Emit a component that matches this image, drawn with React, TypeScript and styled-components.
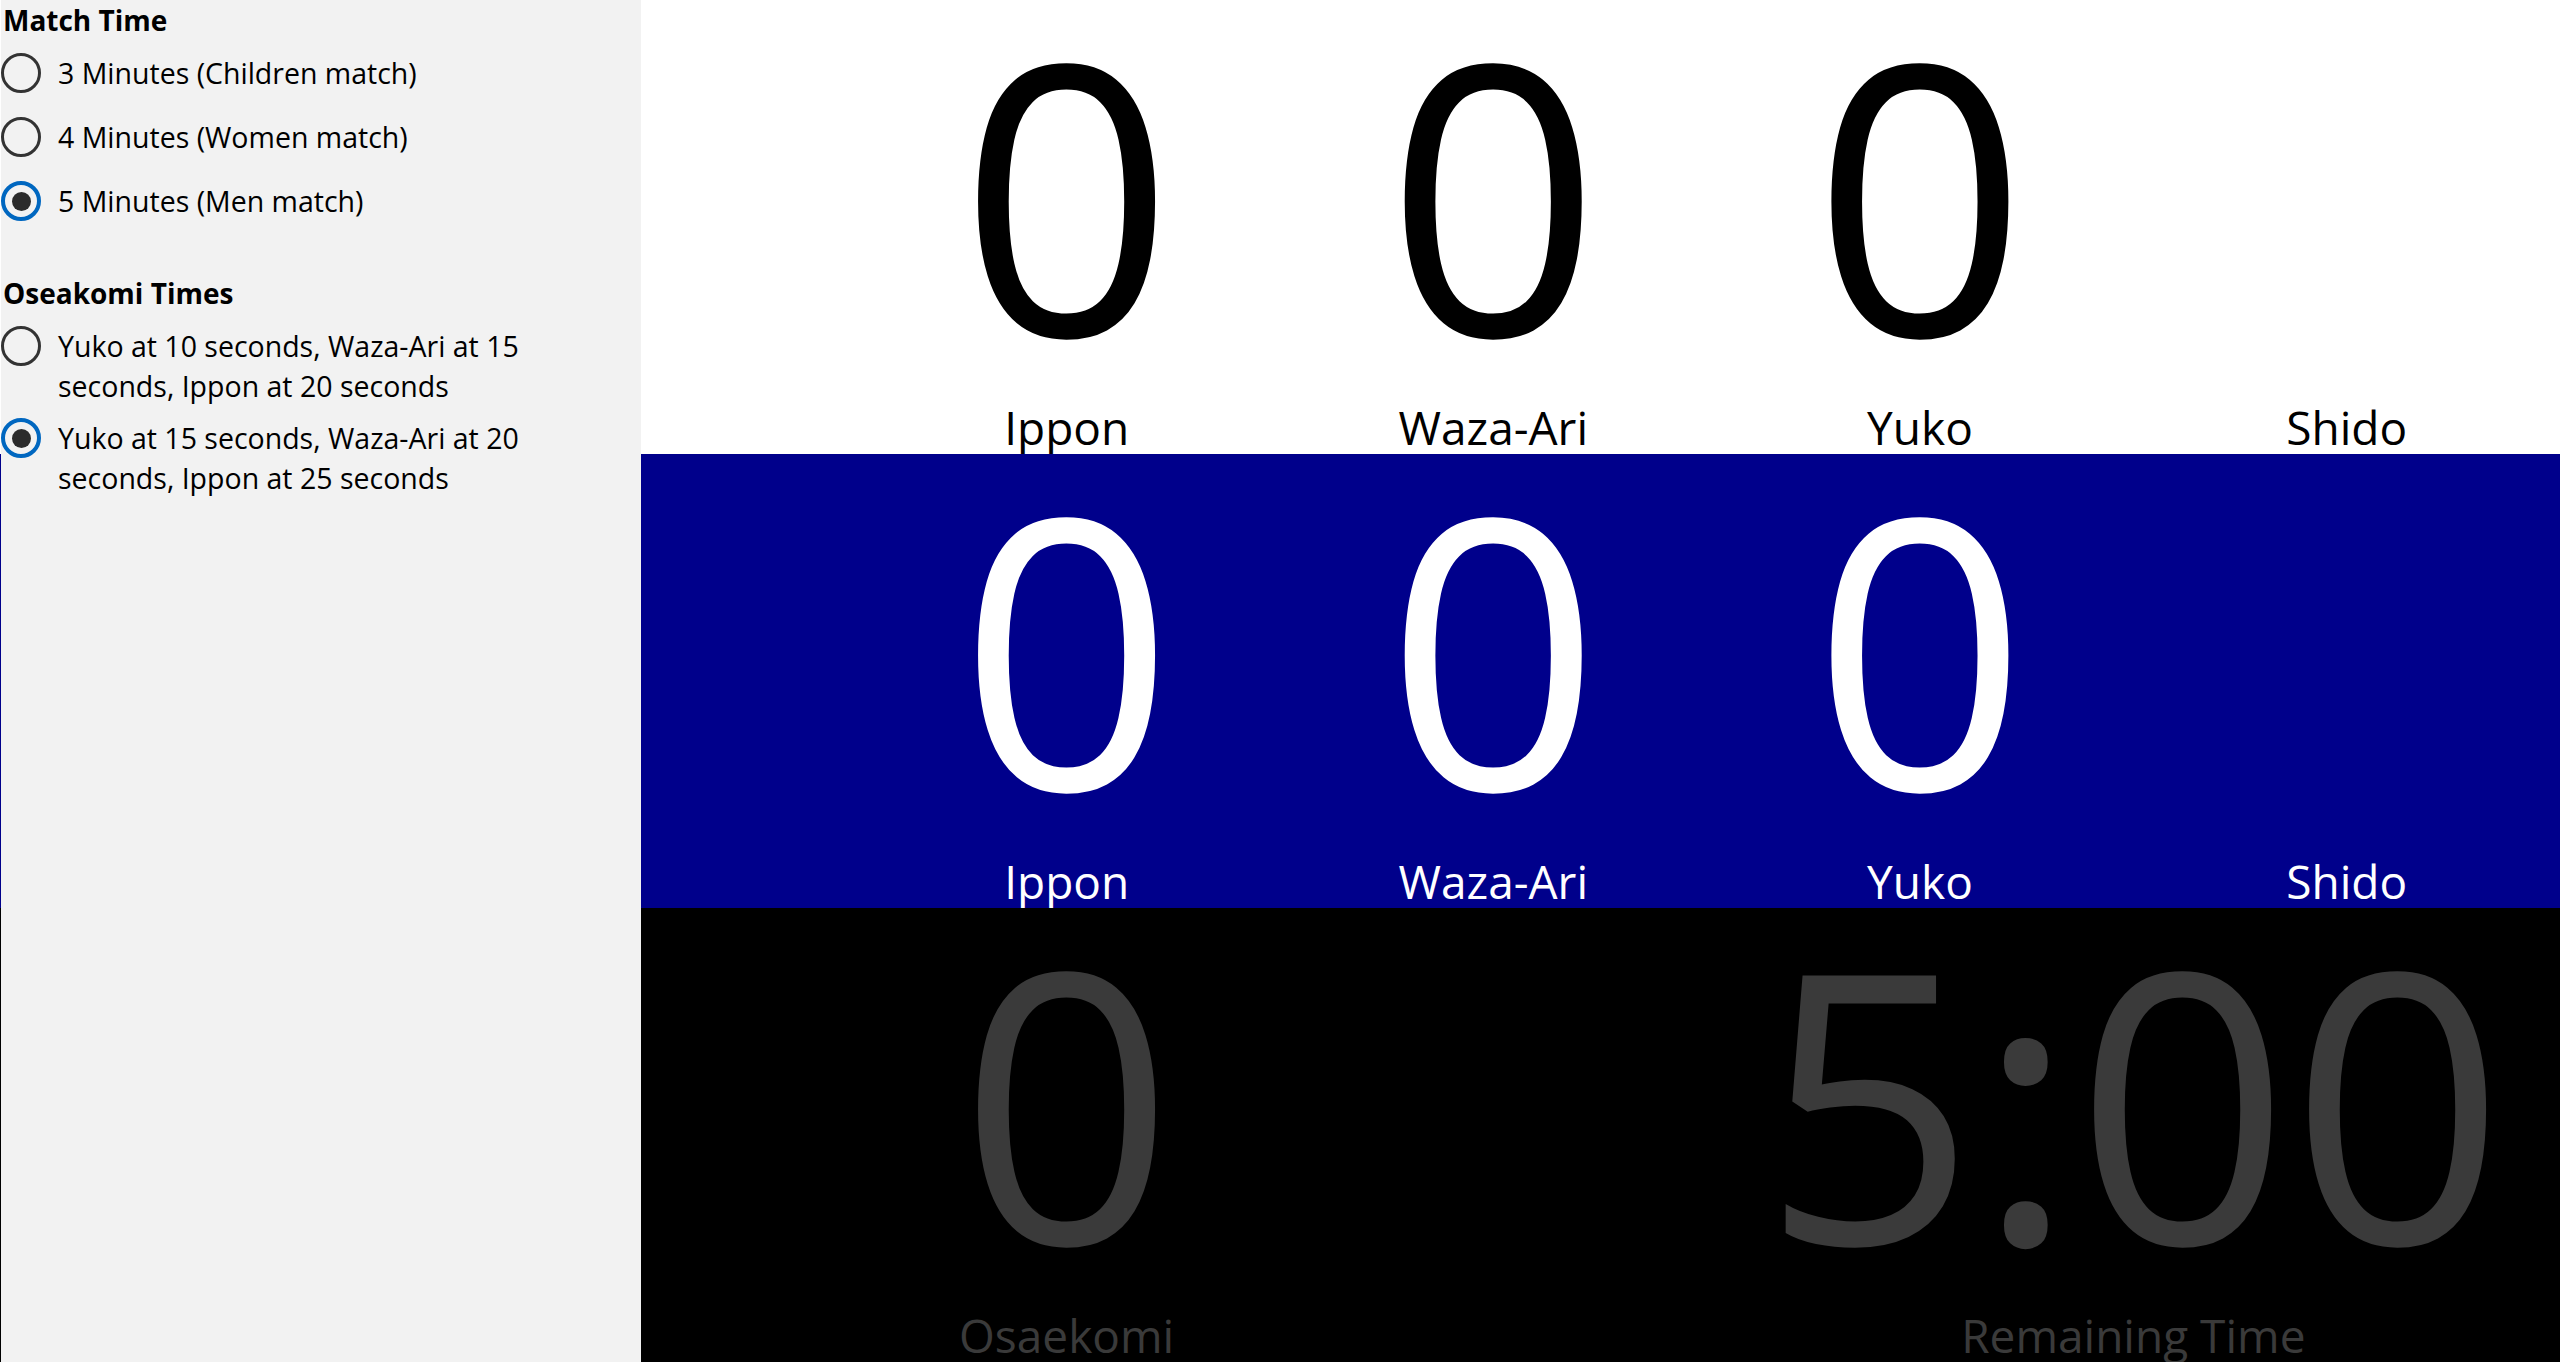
import React from "react";
import styled, { createGlobalStyle } from "styled-components";

const GlobalStyle = createGlobalStyle`
  html, body {
    margin: 0;
    padding: 0;
    overflow: hidden;
    background: #000;
  }
  body {
    font-family: "Open Sans", "Noto Sans", "Liberation Sans", sans-serif;
  }
  * { box-sizing: border-box; }
`;

const Page = styled.div`
  position: relative;
  width: 100vw;
  height: 100vh;
  overflow: hidden;
`;

const Board = styled.div`
  display: grid;
  grid-template-rows: repeat(3, 1fr);
  height: 100%;
`;

const Band = styled.div<{ $bg: string; $fg: string }>`
  display: grid;
  grid-template-columns: repeat(6, 1fr);
  background: ${(p) => p.$bg};
  color: ${(p) => p.$fg};
  overflow: hidden;
`;

const Cell = styled.div<{ $col: number; $span?: number }>`
  grid-column: ${(p) => p.$col} / span ${(p) => p.$span ?? 1};
  display: flex;
  flex-direction: column;
  align-items: center;
  height: 100%;
  min-width: 0;
`;

const Digit = styled.div`
  font-size: 376px;
  line-height: 400px;
  margin-top: -10px;
  white-space: nowrap;
`;

const Label = styled.div`
  margin-top: auto;
  font-size: 46px;
  line-height: 54px;
  white-space: nowrap;
`;

const Pane = styled.aside`
  position: absolute;
  top: 0;
  bottom: 0;
  left: 1px;
  width: 640px;
  background: #f2f2f2;
  padding-left: 2px;
  color: #000;
`;

const Section = styled.section`
  & + & {
    margin-top: 40px;
  }
`;

const SectionTitle = styled.div`
  font-weight: 700;
  font-size: 28px;
  line-height: 41px;
  height: 41px;
`;

const RadioRow = styled.label`
  display: flex;
  align-items: flex-start;
  min-height: 64px;
  cursor: pointer;
`;

const RadioCircle = styled.span<{ $checked: boolean }>`
  flex: none;
  display: flex;
  align-items: center;
  justify-content: center;
  width: 40px;
  height: 40px;
  margin-top: 12px;
  margin-left: -2px;
  border-radius: 50%;
  border: ${(p) => (p.$checked ? "4px solid #0067c0" : "3.5px solid #333333")};
  &::after {
    content: "";
    display: ${(p) => (p.$checked ? "block" : "none")};
    width: 19px;
    height: 19px;
    border-radius: 50%;
    background: #2b2b2b;
  }
`;

const RadioText = styled.span`
  padding-top: 12px;
  margin-left: 17px;
  max-width: 540px;
  font-size: 28.5px;
  line-height: 40px;
  color: #000;
`;

type Option = { text: string; checked: boolean };

const matchTimes: Option[] = [
  { text: "3 Minutes (Children match)", checked: false },
  { text: "4 Minutes (Women match)", checked: false },
  { text: "5 Minutes (Men match)", checked: true },
];

const oseakomiTimes: Option[] = [
  { text: "Yuko at 10 seconds, Waza-Ari at 15 seconds, Ippon at 20 seconds", checked: false },
  { text: "Yuko at 15 seconds, Waza-Ari at 20 seconds, Ippon at 25 seconds", checked: true },
];

function RadioGroup({ title, options }: { title: string; options: Option[] }) {
  return (
    <Section>
      <SectionTitle>{title}</SectionTitle>
      {options.map((o) => (
        <RadioRow key={o.text}>
          <RadioCircle $checked={o.checked} />
          <RadioText>{o.text}</RadioText>
        </RadioRow>
      ))}
    </Section>
  );
}

function ScoreBand({ bg, fg }: { bg: string; fg: string }) {
  return (
    <Band $bg={bg} $fg={fg}>
      <Cell $col={3}>
        <Digit>0</Digit>
        <Label>Ippon</Label>
      </Cell>
      <Cell $col={4}>
        <Digit>0</Digit>
        <Label>Waza-Ari</Label>
      </Cell>
      <Cell $col={5}>
        <Digit>0</Digit>
        <Label>Yuko</Label>
      </Cell>
      <Cell $col={6}>
        <Label>Shido</Label>
      </Cell>
    </Band>
  );
}

export default function App() {
  return (
    <Page>
      <GlobalStyle />
      <Board>
        <ScoreBand bg="#ffffff" fg="#000000" />
        <ScoreBand bg="#00008b" fg="#ffffff" />
        <Band $bg="#000000" $fg="#3a3a3a">
          <Cell $col={3}>
            <Digit>0</Digit>
            <Label>Osaekomi</Label>
          </Cell>
          <Cell $col={5} $span={2}>
            <Digit>5:00</Digit>
            <Label>Remaining Time</Label>
          </Cell>
        </Band>
      </Board>
      <Pane>
        <RadioGroup title="Match Time" options={matchTimes} />
        <RadioGroup title="Oseakomi Times" options={oseakomiTimes} />
      </Pane>
    </Page>
  );
}
